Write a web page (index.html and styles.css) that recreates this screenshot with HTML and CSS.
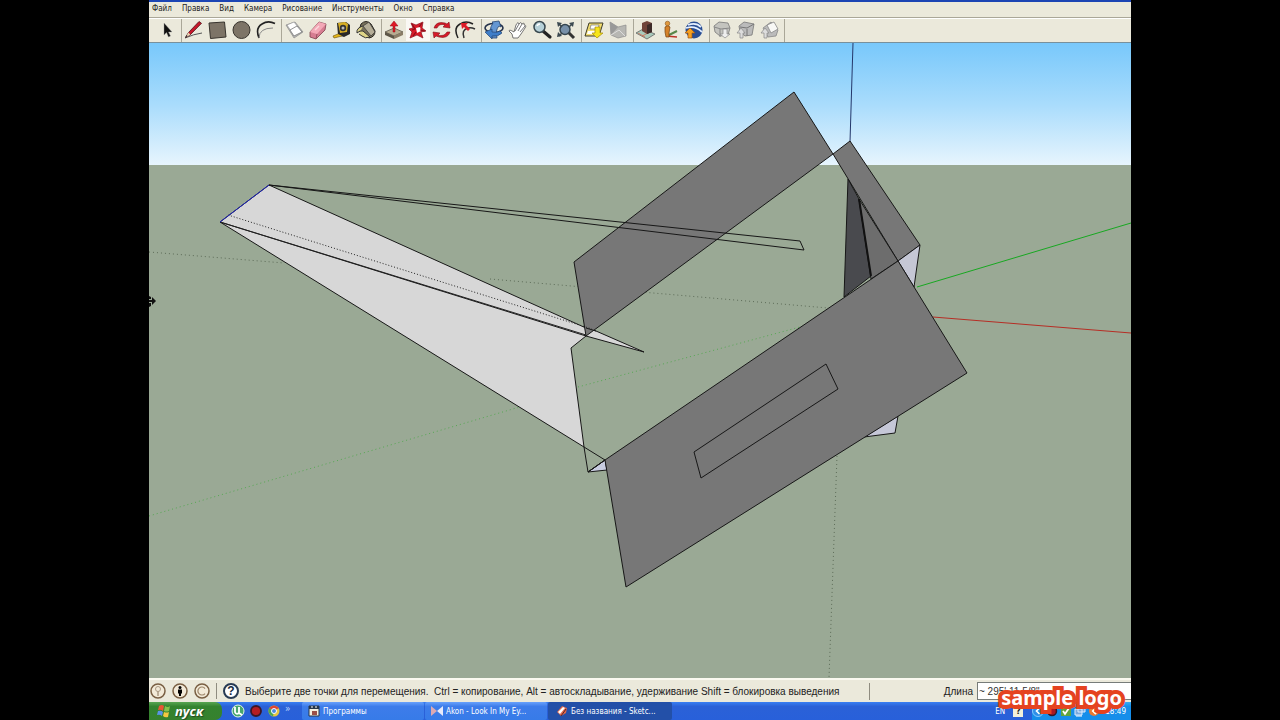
FILE: index.html
```html
<!DOCTYPE html>
<html lang="ru">
<head>
<meta charset="utf-8">
<title>Без названия - SketchUp</title>
<link rel="stylesheet" href="styles.css">
</head>
<body>
<div class="desktop">
  <nav class="menu" aria-label="Меню">
    <button>Файл</button><button>Правка</button><button>Вид</button><button>Камера</button><button>Рисование</button><button>Инструменты</button><button>Окно</button><button>Справка</button>
  </nav>

  <div class="toolbar" role="toolbar" aria-label="Инструменты">
    <div class="group first">
      <button aria-label="Выбор"><svg viewBox="0 0 24 22"><path d="M12 4v12l2.500-2.500 2 4.500 2-1-2-4h3.500z" fill="#111" stroke="#999" stroke-width=".4"/></svg></button>
    </div>
    <div class="group">
      <button aria-label="Карандаш"><svg viewBox="0 0 24 22"><path d="M3 19q9-4 17-5" fill="none" stroke="#555"/><path d="M3.500 18.500l3-5L17 2.500l2.500 1.800L8 16z" fill="#c8182a" stroke="#4b1018" stroke-width=".8"/><path d="M3.500 18.500l3-5 1.800 2.200z" fill="#ead9b5"/><path d="M3 19l1.500-3 1 1z" fill="#222"/></svg></button>
      <button aria-label="Прямоугольник"><svg viewBox="0 0 24 22"><path d="M3 4l15.500-1L20 18 4.500 19.500z" fill="#7d7467" stroke="#38342e"/></svg></button>
      <button aria-label="Круг"><svg viewBox="0 0 24 22"><circle cx="11.500" cy="11" r="8.500" fill="#7d7467" stroke="#38342e"/></svg></button>
      <button aria-label="Дуга"><svg viewBox="0 0 24 22"><path d="M5 19Q1 9 8 5q6-4 13-.5" fill="none" stroke="#222" stroke-width="1.600"/><path d="M5 19q0-10 14-10" fill="none" stroke="#888"/></svg></button>
    </div>
    <div class="group">
      <button aria-label="Компонент"><svg viewBox="0 0 24 22"><path d="M4 6l9-3 8 10-9 6z" fill="#bbb" stroke="#888" stroke-width=".7"/><path d="M5 6l7-3 4 5-7 4z" fill="#fff" stroke="#999" stroke-width=".7"/><path d="M8 11l7-4 5 6-8 4z" fill="#fff" stroke="#777" stroke-width=".8"/></svg></button>
      <button aria-label="Ластик"><svg viewBox="0 0 24 22"><path d="M4 13L13 3l7 2-1 6-9 9-6-2z" fill="#d67d91" stroke="#7d414d" stroke-width=".8"/><path d="M4 13l9-10 7 2-9 10z" fill="#f3a9b7"/><path d="M11 15l-1 5" stroke="#94505d"/><path d="M9 11l4-4" stroke="#fbd7dd" stroke-width="1.500"/></svg></button>
      <button aria-label="Рулетка"><svg viewBox="0 0 24 22"><path d="M7 4l9-1 4 3v9l-6 3-6-2z" fill="#282828"/><path d="M8 4l7-1 3 2-1 8-7 1z" fill="#d5ad25"/><circle cx="13" cy="9" r="3.200" fill="#333"/><circle cx="13" cy="9" r="1.500" fill="#bbb"/><path d="M8 15l-5 2 1 2 8-2" fill="#e7b719" stroke="#765c14" stroke-width=".7"/></svg></button>
      <button aria-label="Заливка"><svg viewBox="0 0 24 22"><path d="M7 5q5-5 10 0l4 7q0 6-6 7L5 12z" fill="#77705a" stroke="#28251f"/><path d="M9 7l6-4 6 10-4 4z" fill="#b5ae98" stroke="#333" stroke-width=".7"/><path d="M9 7Q2 9 3 14q3-3 6-2l7 6q-5 2-8-1L5 15" fill="#ddd487" stroke="#333"/></svg></button>
    </div>
    <div class="group">
      <button aria-label="Тяни/Толкай"><svg viewBox="0 0 24 22"><path d="M3 13l9-4 9 4-9 4z" fill="#b7ac91" stroke="#4b4538" stroke-width=".7"/><path d="M3 13v3l9 4v-3z" fill="#5c5546"/><path d="M12 17v3l9-4v-3z" fill="#8a7d66"/><path d="M11 13V7H8l4-5 4 5h-3v6z" fill="#e01825" stroke="#8f1018" stroke-width=".5"/></svg></button>
      <button class="active" aria-label="Переместить" aria-pressed="true"><svg viewBox="0 0 24 22"><path d="M5 4l5 2 7-3-1 6 4 3-5 1 2 6-6-3-7 3 2-6-3-3 4-1z" fill="#d91b2a" stroke="#8a1220" stroke-width=".7"/><path d="M10 9l4-1 1 4-4 2z" fill="#fff"/><path d="M6 5l3 5-3 1M16 4l-3 4M19 12l-5-1M7 17l3-4" fill="none" stroke="#8c0e1b" stroke-width="1.200"/></svg></button>
      <button aria-label="Повернуть"><svg viewBox="0 0 24 22"><path d="M4 9q2-7 11-5l2 1 2-2 1 6-7-1 2-2q-6-2-8 3zM20 13q-2 7-11 5l-3-1-2 2-1-6 7 1-2 2q6 2 9-3z" fill="#d71928" stroke="#7d1018" stroke-width=".6"/></svg></button>
      <button aria-label="Смещение"><svg viewBox="0 0 24 22"><path d="M4 19Q-1 9 6 5q6-4 13 0" fill="none" stroke="#222" stroke-width="1.500"/><path d="M10 19q-3-8 4-10 3-1 7 1" fill="none" stroke="#333" stroke-width="1.500"/><path d="M14 12l-4-4-2 2-1-6 7 0-2 2 4 4z" fill="#dc1b28"/></svg></button>
    </div>
    <div class="group">
      <button aria-label="Орбита"><svg viewBox="0 0 24 22"><ellipse cx="12" cy="9" rx="9" ry="4.500" fill="none" stroke="#25324b" stroke-width="1.600"/><path d="M10 19Q6 11 11 4l-1-1 7-1 2 6-2-1q-4 4-2 12z" fill="#6396d2" stroke="#244572" stroke-width=".8"/><path d="M3 13l7-3v3q5 1 8-1l2 2q-4 4-10 3v3z" fill="#3e7ec9" stroke="#244572" stroke-width=".7"/></svg></button>
      <button aria-label="Панорама"><svg viewBox="0 0 24 22"><path d="M7 19l-1-4-3-3q0-2 5 1l2-7q2-4 3-1 2-3 3 0 3-2 2 1 3 0 1 3l-4 6-3 4z" fill="#fff" stroke="#555" stroke-width=".8"/><path d="M9 12l4-7M12 12l4-7M14 13l5-6" fill="none" stroke="#555" stroke-width=".8"/></svg></button>
      <button aria-label="Масштаб"><svg viewBox="0 0 24 22"><path d="M13 12l7 6" stroke="#222" stroke-width="3.200" stroke-linecap="round"/><circle cx="9.500" cy="8" r="5.500" fill="#b7d1d8" stroke="#38474e" stroke-width="1.500"/><path d="M7 7q1-2 3-2" stroke="#fff" fill="none" stroke-width="1.500"/></svg></button>
      <button aria-label="В размер окна"><svg viewBox="0 0 24 22"><path d="M3 3l5 1-4 4zM20 3l-5 1 4 4zM3 18l1-5 4 4z" fill="#3b4850"/><path d="M14 13l6 6" stroke="#333" stroke-width="3"/><circle cx="11" cy="10.500" r="5" fill="#7790a9" stroke="#34444e" stroke-width="1.500"/><path d="M5 5l3 3M18 5l-3 3M5 17l3-3" stroke="#3b4850" stroke-width="1.500"/></svg></button>
    </div>
    <div class="group">
      <button aria-label="Получить модели"><svg viewBox="0 0 24 22"><path d="M3 17L7 4h14l-4 13z" fill="#f3de70" stroke="#3d3b28"/><path d="M9 6h8l-1 4H8z" fill="#fff" stroke="#777" stroke-width=".7"/><path d="M6 12h7l-1 3H5z" fill="#fff"/><path d="M13 8h5v6h3l-6 5-5-5h3z" fill="#f7e519" stroke="#a78c10" stroke-width=".7"/></svg></button>
      <button aria-label="Отправить модель"><svg viewBox="0 0 24 22"><path d="M4 3l8 5 8-2v11l-8 2-7-3z" fill="#b7b7b3" stroke="#8c8c8c" stroke-width=".7"/><path d="M4 3l8 5-7 8z" fill="#999"/><path d="M5 16l8-5 6 6" fill="none" stroke="#ddd"/></svg></button>
    </div>
    <div class="group">
      <button aria-label="Добавить здание"><svg viewBox="0 0 24 22"><path d="M2 14l7-4 12 5-8 5z" fill="#aacbbd" stroke="#555" stroke-width=".7"/><path d="M4 14l7 4M8 17l8-4" stroke="#d46a51" stroke-width=".8"/><path d="M8 4l5-2 5 2v9l-5 2-5-3z" fill="#704339"/><path d="M13 6v9l5-2V4z" fill="#3d2a28"/></svg></button>
      <button aria-label="Фототекстуры"><svg viewBox="0 0 24 22"><path d="M9 17l10-5" stroke="#578748" stroke-width="2"/><path d="M8 17l11 1" stroke="#bc3327" stroke-width="1.500"/><path d="M7 8q3-3 5 0l-1 6v4H8l-1-5z" fill="#d5822a" stroke="#75420e" stroke-width=".7"/><circle cx="9.500" cy="4.500" r="2.300" fill="#df983d" stroke="#75420e" stroke-width=".5"/></svg></button>
      <button aria-label="Google Планета Земля"><svg viewBox="0 0 24 22"><circle cx="12" cy="11" r="8.500" fill="#294d93"/><path d="M6 6q8-3 13 2M4 9q9-3 16 4" fill="none" stroke="#e4efff" stroke-width="1.800"/><path d="M6 19v-5H3l5-5 5 5h-3v5z" fill="#f5a021" stroke="#a45711" stroke-width=".7"/></svg></button>
    </div>
    <div class="group">
      <button aria-label="Загрузить"><svg viewBox="0 0 24 22"><path d="M4 7l5-4 9 1 2 5-2 7-8 1-5-4z" fill="#c4c4bf" stroke="#777" stroke-width=".8"/><path d="M4 8l7 2 9-1M10 10v8" fill="none" stroke="#888"/><path d="M13 10h4v5h3l-5 4-5-4h3z" fill="#eee" stroke="#888" stroke-width=".7"/></svg></button>
      <button aria-label="Выгрузить"><svg viewBox="0 0 24 22"><path d="M5 7l5-4 10 2-2 11-7 1-5-4z" fill="#bbb" stroke="#777" stroke-width=".8"/><path d="M6 8l7 1 7-4M13 10v7" fill="none" stroke="#777"/><path d="M6 19v-5H3l4-5 4 5H9v5z" fill="#ddd" stroke="#888" stroke-width=".7"/></svg></button>
      <button aria-label="Поделиться"><svg viewBox="0 0 24 22"><path d="M5 9l8-6 7 8-2 6-8 1z" fill="#bbb" stroke="#888" stroke-width=".8"/><path d="M9 6l7-3 4 7-7 4z" fill="#f8f8f5" stroke="#888" stroke-width=".8"/><path d="M6 19v-5H3l4-5 4 5H9v5z" fill="#ddd" stroke="#888" stroke-width=".7"/></svg></button>
    </div>
  </div>

  <main class="view">
    <svg class="scene" viewBox="149 43 982 635" preserveAspectRatio="xMidYMid slice" role="img" aria-label="Модель">
      <defs>
        <linearGradient id="sky" x1="0" y1="0" x2="0" y2="1"><stop offset="0" stop-color="#78c8fb"/><stop offset=".5" stop-color="#a9dcfc"/><stop offset="1" stop-color="#e8f5fd"/></linearGradient>
      </defs>
      <path d="M149 43h982v123H149z" fill="url(#sky)"/>
      <path d="M149 165h982v513H149z" fill="#9aa995"/>
      <g class="dots">
        <path d="M149 252L284 263M490 279L828 308"/>
        <path d="M149 516L540 401M578 387L822 321" class="green"/>
        <path d="M837 456L829 678"/>
      </g>
      <path d="M853 43L850 142" class="axis blue"/>
      <path d="M917 287L1131 223" class="axis lime"/>
      <path d="M933 317L1131 333" class="axis red"/>
      <g class="edges">
        <path d="M269 185L586 328 596 331 644 352 586 336 571 348 584 447 220 222z" fill="#d7d7d7"/>
        <path d="M574 262L794 92 833 154 586 336z" fill="#777"/>
        <path d="M833 154L850 141 920 245 898 261z" fill="#777"/>
        <path d="M848 179L859 199 871 276 844 297z" fill="#494a4e"/>
        <path d="M859 199L898 261 871 279z" fill="#6d6d6d"/>
        <path d="M898 261L920 245 914 287z" fill="#c5c7d5"/>
        <path d="M864 437L898 416 895 433z" fill="#c5c7d7"/>
        <path d="M588 472L605 460 607 470z" fill="#c8cce0"/>
        <path d="M605 460L898 261 967 373 626 587z" fill="#777"/>
        <path d="M694 452L826 364 838 389 701 478z"/>
        <path d="M269 185L800 241 804 250zM584 447L588 472 605 460 584 447M220 222L586 336M586 328L596 331M588 472L605 460"/>
      </g>
      <path d="M859 199L871 276" class="heavy"/>
      <path d="M220 222L586 335" class="double"/>
      <path d="M228 215L592 329" class="hidden"/>
      <path d="M269 185L220 222" class="selected"/>
      <path d="M149 300h3v-3l4 4-4 4v-3h-3zM149 296l2 1v2h-2zM149 303h2v3l-2 1z" fill="#111"/>
    </svg>
  </main>

  <footer class="status">
    <button class="round" aria-label="Геопозиция"><svg viewBox="0 0 16 16"><circle cx="8" cy="8" r="7" fill="#f2ead8" stroke="#795f43" stroke-width="1.500"/><circle cx="8" cy="6" r="2.500" fill="none" stroke="#ab9a84"/><path d="M8 8v5" stroke="#ab9a84" stroke-width="1.500"/></svg></button>
    <button class="round" aria-label="Автор"><svg viewBox="0 0 16 16"><circle cx="8" cy="8" r="7" fill="#f2ead8" stroke="#795f43" stroke-width="1.500"/><circle cx="8" cy="4.500" r="1.500"/><path d="M6 6.500h4v4H9V13H7v-2.500H6z"/></svg></button>
    <button class="round" aria-label="Права"><svg viewBox="0 0 16 16"><circle cx="8" cy="8" r="7" fill="#f2ead8" stroke="#795f43" stroke-width="1.500"/><path d="M11 5.500a4 4 0 1 0 0 5" fill="none" stroke="#9b8468" stroke-width="1.200"/></svg></button>
    <span class="rule"></span>
    <button class="round help" aria-label="Справка">?</button>
    <p class="hint">Выберите две точки для перемещения.&nbsp; Ctrl = копирование, Alt = автоскладывание, удерживание Shift = блокировка выведения</p>
    <div class="measure">
      <label for="length">Длина</label>
      <input id="length" type="text" value="~ 295' 11 5/8&quot;">
    </div>
  </footer>

  <div class="taskbar">
    <button class="start"><svg viewBox="0 0 14 14"><path d="M2 2q3-2 5 0L6 7Q4 5 1 6z" fill="#e95735"/><path d="M8 2q3 2 5 0l-1 5q-3 1-5 0z" fill="#86c34b"/><path d="M1 7q3-1 5 1l-1 4q-2-2-5-1z" fill="#5a93e9"/><path d="M7 8q3 1 5 0l-1 5q-3 1-5-1z" fill="#f4c742"/></svg>пуск</button>
    <div class="quick">
      <button aria-label="uTorrent"><svg viewBox="0 0 14 14"><circle cx="7" cy="7" r="6" fill="#48a66c" stroke="#e5f5e8"/><path d="M4 3v5q1 3 4 1V3M8 9l3 2" fill="none" stroke="#fff" stroke-width="1.800"/></svg></button>
      <button aria-label="Запись"><svg viewBox="0 0 14 14"><circle cx="7" cy="7" r="5" fill="#b51d22" stroke="#3b1728" stroke-width="1.800"/></svg></button>
      <button aria-label="Chrome"><svg viewBox="0 0 14 14"><circle cx="7" cy="7" r="5.500" fill="#e7c740"/><path d="M2 4q5-5 10 0l-5 3z" fill="#dc4637"/><path d="M2 4q-2 6 4 8.500L7 7z" fill="#4ba653"/><circle cx="7" cy="7" r="2.500" fill="#4b89df" stroke="#fff"/></svg></button>
      <span class="more">»</span>
    </div>
    <div class="tasks">
      <button><svg viewBox="0 0 12 12"><path d="M1 1h10v10H1z" fill="#f4f0df" stroke="#27374a"/><path d="M1 1h10v3H1z" fill="#27374a"/><path d="M3 2h2M7 2h2" stroke="#fff"/><path d="M4 6h5v4H4z" fill="#9b5046"/></svg>Программы</button>
      <button><svg viewBox="0 0 12 12"><path d="M0 1l6 5-6 5z" fill="#dda9b2"/><path d="M12 1L6 6l6 5z" fill="#e8eafa"/></svg>Akon - Look In My Ey...</button>
      <button class="current"><svg viewBox="0 0 12 12"><path d="M1 7l5-6 5 2-1 5-5 3z" fill="#dd674a"/><path d="M2 7l5-5 2 1-5 6z" fill="#fff"/><path d="M5 11l5-7" stroke="#5b2320"/></svg>Без названия - Sketc...</button>
    </div>
    <span class="lang">EN</span>
    <button class="ask" aria-label="Помощь">?</button>
    <div class="tray">
      <svg viewBox="0 0 12 12"><circle cx="6" cy="6" r="5.500" fill="#2d8fe8" stroke="#84c6fc"/><path d="M7.500 3l-3 3 3 3" fill="none" stroke="#fff" stroke-width="1.600"/></svg>
      <svg viewBox="0 0 12 12"><circle cx="6" cy="6" r="4.500" fill="#a91b25" stroke="#341a2b" stroke-width="1.500"/></svg>
      <svg viewBox="0 0 12 12"><path d="M1 1h10v10H1z" fill="#5fa43e"/><path d="M3 6l2 3 4-6" fill="none" stroke="#fff" stroke-width="1.800"/></svg>
      <svg viewBox="0 0 12 12"><path d="M4 1h7v6H4zM1 4h7v6H1z" fill="#79a9df" stroke="#dcecff"/><path d="M2 11h6" stroke="#fff"/></svg>
      <svg viewBox="0 0 12 12"><circle cx="6" cy="6" r="5" fill="#e97932"/><path d="M8 3L5 6l3 3" fill="none" stroke="#fff" stroke-width="2"/></svg>
      <time>18:49</time>
    </div>
  </div>
  <div class="logo">sample logo</div>
</div>
</body>
</html>
```
FILE: styles.css
```css
* { box-sizing: border-box; }
body { margin: 0; background: #000; font-family: "DejaVu Sans Condensed", "DejaVu Sans", sans-serif; }
button { border: 0; padding: 0; background: none; color: inherit; font: inherit; white-space: nowrap; }
svg { display: block; }

.desktop {
  position: relative;
  display: flex;
  flex-direction: column;
  min-height: 100vh;
  margin: 0 149px;
  background: #ebe9db;
  overflow: hidden;
}

.menu {
  display: flex;
  gap: 10px;
  height: 18px;
  padding: 0 3px;
  border-top: 2px solid #1c45b4;
  border-bottom: 1px solid #aaa798;
  font-size: 8px;
  line-height: 12px;
  color: #222;
}
.menu button { height: 14px; }

.toolbar { display: flex; height: 25px; padding: 0 3px; border-top: 1px solid #fff; border-bottom: 1px solid #77909c; }
.group { display: flex; padding-right: 3px; border-right: 1px solid #aaa798; }
.group.first { padding-right: 5px; }
.group:last-child { padding-right: 2px; }
.group button { width: 24px; height: 22px; }
.group svg { width: 24px; height: 22px; }
.group .active { background: #faf8f4; }

.view { flex: 1; min-height: 0; display: flex; position: relative; background: #9aa995; }
.scene { width: 100%; height: auto; }
.edges { fill: none; stroke: #171717; stroke-width: 1; stroke-linejoin: round; }
.dots { fill: none; stroke: #5d6c58; stroke-width: 1; stroke-dasharray: 1 3; }
.dots .green { stroke: #55a852; }
.axis { fill: none; stroke-width: 1; }
.blue { stroke: #24376a; }
.lime { stroke: #18a821; }
.red { stroke: #b62e25; }
.heavy { stroke: #111; stroke-width: 2; }
.double { stroke: #222; stroke-width: 1; }
.hidden { stroke: #222; stroke-dasharray: 1 2; }
.selected { stroke: #1b20bc; stroke-width: 1; }

.status {
  display: flex;
  align-items: center;
  gap: 6px;
  height: 24px;
  padding-left: 1px;
  border-top: 2px solid #faf9f0;
  font-family: "Liberation Sans", sans-serif;
  font-size: 10px;
  color: #222;
}
.round { width: 16px; height: 16px; flex: none; }
.rule { width: 1px; height: 16px; background: #8f8c80; }
.help { border: 2px solid #283b54; border-radius: 50%; background: #fff; font-size: 12px; font-weight: bold; line-height: 12px; color: #17293e; }
.hint { flex: 1; margin: 0; white-space: nowrap; overflow: hidden; }
.measure { display: flex; flex: none; align-items: center; gap: 4px; padding-left: 74px; border-left: 1px solid #8f8c80; height: 17px; }
.measure input { width: 154px; height: 18px; padding: 0 1px; border: 1px solid #777c79; border-right: 0; background: #fff; font: inherit; color: #333; }

.taskbar {
  display: flex;
  align-items: center;
  height: 18px;
  background: linear-gradient(#397ff2, #2b61d7 25%, #2860da);
  color: #fff;
  font-size: 8px;
}
.start {
  display: flex;
  align-items: center;
  gap: 4px;
  width: 73px;
  height: 18px;
  padding-left: 8px;
  border-radius: 0 7px 7px 0;
  background: linear-gradient(#58a552, #34832f 25%, #36812e);
  font: italic bold 13px/18px "Open Sans", sans-serif;
  text-shadow: 1px 1px 1px #204720;
}
.start svg { width: 14px; height: 14px; }
.quick { display: flex; align-items: center; gap: 4px; width: 80px; padding-left: 9px; }
.quick svg { width: 14px; height: 14px; }
.more { align-self: flex-start; font-size: 10px; line-height: 10px; color: #b6d1ff; }
.tasks { display: flex; flex: 1; gap: 1px; }
.tasks button { display: flex; align-items: center; gap: 3px; width: 122px; height: 18px; padding-left: 6px; border-radius: 2px; background: linear-gradient(#68a1fc, #3d7cea 25%, #377be8); }
.tasks button.current { width: 124px; padding-left: 8px; background: #2350a8; }
.tasks svg { width: 12px; height: 12px; }
.lang { margin-right: 8px; }
.ask { width: 10px; height: 11px; background: #f3f0da; color: #222; font-size: 9px; font-weight: bold; line-height: 11px; }
.tray { display: flex; align-items: center; gap: 2px; height: 18px; margin-left: 9px; padding-right: 5px; background: linear-gradient(#36adf5, #168eea 25%, #168eea); }
.tray svg { width: 12px; height: 12px; }
.tray time { margin-left: 3px; }

.logo {
  position: absolute;
  right: 9px;
  bottom: 8px;
  font: bold 20px/28px "Noto Sans", sans-serif;
  color: #fff;
  -webkit-text-stroke: 8px #e54320;
  paint-order: stroke fill;
  stroke-linejoin: round;
}
```
